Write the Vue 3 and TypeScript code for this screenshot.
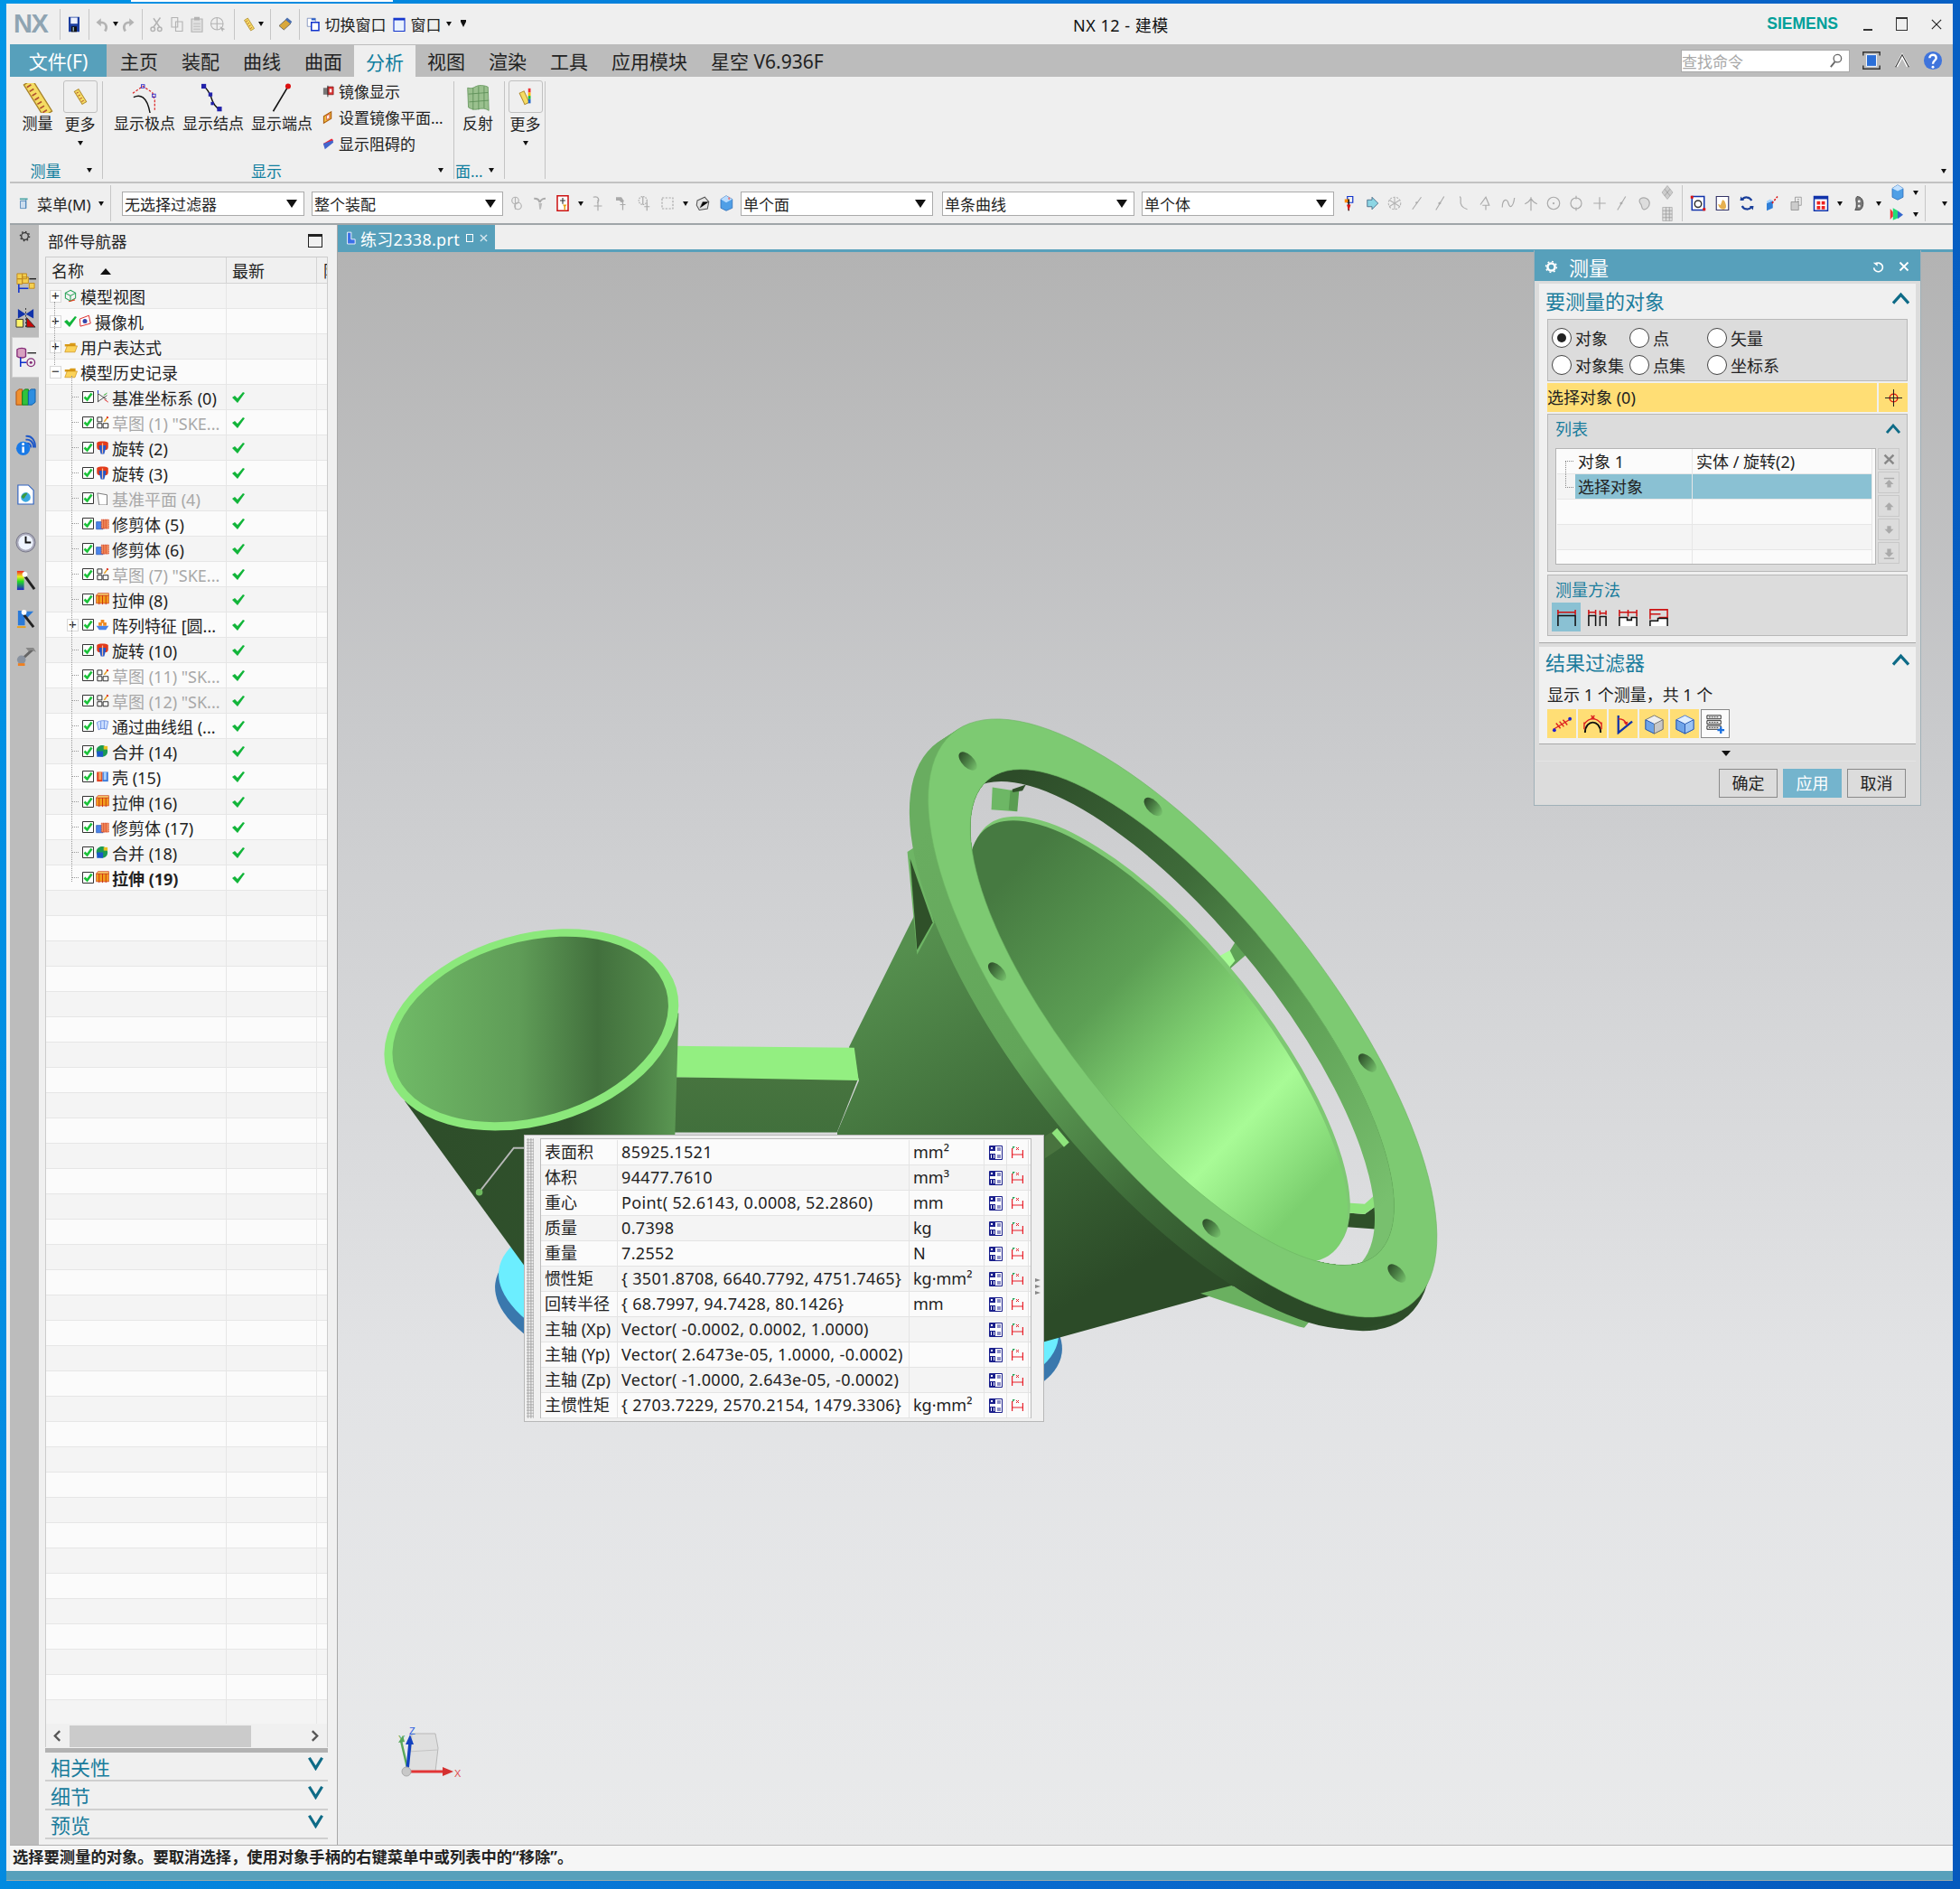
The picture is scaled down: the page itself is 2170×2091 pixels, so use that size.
<script setup lang="ts">
// rotated ellipse as a path, so it can be cut with fill-rule evenodd
const ell = (cx: number, cy: number, rx: number, ry: number, deg: number): string => {
  const r = (deg * Math.PI) / 180
  const dx = rx * Math.cos(r)
  const dy = rx * Math.sin(r)
  const a = `${(cx - dx).toFixed(1)} ${(cy - dy).toFixed(1)}`
  const b = `${(cx + dx).toFixed(1)} ${(cy + dy).toFixed(1)}`
  return `M${a}A${rx} ${ry} ${deg} 1 0 ${b}A${rx} ${ry} ${deg} 1 0 ${a}Z`
}

type Pt = [number, number]

// ring of the big horn, in the crop's coordinates
const ringHole = ell(807, 755, 815, 299, 45.1)
const ringFace = ell(808, 757, 972, 383, 45.3)
const ringSides = [1, 0.85, 0.7, 0.55, 0.4, 0.25, 0.1].map(
  (t) => ell(808 - 54 * t, 757 + 30 * t, 972, 383, 45.3) + ringHole,
)
const ringUnder = ell(792, 791, 972, 383, 45.3) + ringHole
const wallBand = ringHole + ell(751, 785, 815, 299, 45.1)
const hornInner = ell(738, 815, 728, 265, 45)
const hornRim = ell(745, 805, 728, 265, 45)
const ringHoles: Pt[] = [[187, 120], [723, 233], [272, 642], [1343, 868], [892, 1278], [1428, 1390]]

// small funnel on the left
const funnelRim = ell(466, 368, 436, 276, -16.2)
const funnelIn = ell(463, 367, 409, 253, -16.2)

const tabs = ['主页', '装配', '曲线', '曲面', '分析', '视图', '渲染', '工具', '应用模块', '星空 V6.936F']

const railIcons = [
  { id: 'r-asm', top: 29 },
  { id: 'r-con', top: 10 },
  { id: 'r-part', top: 6 },
  { id: 'r-books', top: 6 },
  { id: 'r-info', top: 23 },
  { id: 'r-doc', top: 25 },
  { id: 'r-clock', top: 23 },
  { id: 'r-color', top: 12 },
  { id: 'r-tool', top: 12 },
  { id: 'r-wrench', top: 12 },
]

const snapA = ['s1', 's2', 's3']
const snapB = ['s4', 's5', 's6']
const snapLine = ['l1', 'l2', 'l3', 'l4', 'l5', 'l6', 'l7', 'l8', 'l9', 'l2']

interface Row {
  name: string
  icon: string
  kind?: 'root' | 'feature'
  open?: '+' | '-'
  check?: boolean
  muted?: boolean
  bold?: boolean
}

const rows: Row[] = [
  { name: '模型视图', icon: 't-view', kind: 'root', open: '+' },
  { name: '摄像机', icon: 't-cam', kind: 'root', open: '+', check: true },
  { name: '用户表达式', icon: 't-folder', kind: 'root', open: '+' },
  { name: '模型历史记录', icon: 't-folder', kind: 'root', open: '-' },
  { name: '基准坐标系 (0)', icon: 't-csys' },
  { name: '草图 (1) "SKE...', icon: 't-sketch', muted: true },
  { name: '旋转 (2)', icon: 't-rev' },
  { name: '旋转 (3)', icon: 't-rev' },
  { name: '基准平面 (4)', icon: 't-plane', muted: true },
  { name: '修剪体 (5)', icon: 't-trim' },
  { name: '修剪体 (6)', icon: 't-trim' },
  { name: '草图 (7) "SKE...', icon: 't-sketch', muted: true },
  { name: '拉伸 (8)', icon: 't-ext' },
  { name: '阵列特征 [圆...', icon: 't-pat', open: '+' },
  { name: '旋转 (10)', icon: 't-rev' },
  { name: '草图 (11) "SK...', icon: 't-sketch', muted: true },
  { name: '草图 (12) "SK...', icon: 't-sketch', muted: true },
  { name: '通过曲线组 (...', icon: 't-curve' },
  { name: '合并 (14)', icon: 't-unite' },
  { name: '壳 (15)', icon: 't-shell' },
  { name: '拉伸 (16)', icon: 't-ext' },
  { name: '修剪体 (17)', icon: 't-trim' },
  { name: '合并 (18)', icon: 't-unite' },
  { name: '拉伸 (19)', icon: 't-ext', bold: true },
]
const blankRows = 33

const props_ = [
  ['表面积', '85925.1521', 'mm²'],
  ['体积', '94477.7610', 'mm³'],
  ['重心', 'Point( 52.6143, 0.0008, 52.2860)', 'mm'],
  ['质量', '0.7398', 'kg'],
  ['重量', '7.2552', 'N'],
  ['惯性矩', '{ 3501.8708, 6640.7792, 4751.7465}', 'kg·mm²'],
  ['回转半径', '{ 68.7997, 94.7428, 80.1426}', 'mm'],
  ['主轴 (Xp)', 'Vector( -0.0002, 0.0002, 1.0000)', ''],
  ['主轴 (Yp)', 'Vector( 2.6473e-05, 1.0000, -0.0002)', ''],
  ['主轴 (Zp)', 'Vector( -1.0000, 2.643e-05, -0.0002)', ''],
  ['主惯性矩', '{ 2703.7229, 2570.2154, 1479.3306}', 'kg·mm²'],
]

const radios = [
  { label: '对象', on: true },
  { label: '点' },
  { label: '矢量' },
  { label: '对象集' },
  { label: '点集' },
  { label: '坐标系' },
]

const sideBtns = ['b-x', 'b-top', 'b-up', 'b-down', 'b-bottom']
const methods = ['m1', 'm2', 'm3', 'm4']
const filters = ['f1', 'f2', 'f3', 'f4', 'f5']
</script>

<template>
  <div class="desktop">
    <svg class="sprite" aria-hidden="true">
      <defs>
        <symbol id="save" viewBox="0 0 24 24"><path fill="#1b3d9e" d="M4 1h16v22H4z" /><path fill="#eef2ff" d="M7 2h10v9H7z" /><path fill="#111" d="M8 15h8v8H8z" /><path fill="#8ab" d="M10 16h2v6h-2z" /></symbol>
        <symbol id="g-undo" viewBox="0 0 24 24"><path fill="none" stroke="#b3b3b3" stroke-width="3.5" d="M15 22c4-6 2-13-7-13" /><path fill="#b3b3b3" d="M9 3v12L2 9z" /></symbol>
        <symbol id="g-redo" viewBox="0 0 24 24"><path fill="none" stroke="#b3b3b3" stroke-width="3.5" d="M9 22C5 16 7 9 16 9" /><path fill="#b3b3b3" d="M15 3v12l7-6z" /></symbol>
        <symbol id="g-cut" viewBox="0 0 24 24"><path fill="none" stroke="#b3b3b3" stroke-width="2" d="M18 2 8 16M8 3l9 13" /><circle cx="7" cy="19" r="3" fill="none" stroke="#b3b3b3" stroke-width="2" /><circle cx="17" cy="19" r="3" fill="none" stroke="#b3b3b3" stroke-width="2" /></symbol>
        <symbol id="g-copy" viewBox="0 0 24 24"><path fill="#efefef" stroke="#b3b3b3" stroke-width="1.5" d="M4 2h9v14H4zM10 8h10v14H10z" /></symbol>
        <symbol id="g-paste" viewBox="0 0 24 24"><path fill="#e0e0e0" stroke="#b3b3b3" stroke-width="1.5" d="M4 4h16v19H4z" /><path fill="#b3b3b3" d="M8 1h8v5H8z" /><path stroke="#b3b3b3" d="M7 11h10M7 15h10M7 19h10" /></symbol>
        <symbol id="g-globe" viewBox="0 0 24 24"><circle cx="11" cy="11" r="9" fill="#efefef" stroke="#b3b3b3" stroke-width="1.5" /><path fill="none" stroke="#b3b3b3" stroke-width="1.5" d="M2 11h18M11 2v18" /><path fill="#b3b3b3" d="m15 15 8 4-3 1-1 3z" /></symbol>
        <symbol id="ruler" viewBox="0 0 24 24"><g transform="rotate(-32 12 12)"><rect x="8" y="-3" width="8" height="30" fill="#f5dc63" stroke="#a9842a" /><path stroke="#b05030" stroke-width="1.2" d="M9 0h4M9 4h4M9 8h4M9 12h4M9 16h4M9 20h4M9 24h4" /></g></symbol>
        <symbol id="ruler2" viewBox="0 0 24 24"><g transform="rotate(-32 12 12)"><rect x="9" y="3" width="6" height="18" fill="#f5dc63" stroke="#b08a2c" /><path stroke="#b05030" d="M10 6h3M10 10h3M10 14h3M10 18h3" /></g></symbol>
        <symbol id="ruler3" viewBox="0 0 24 24"><g transform="rotate(-25 12 12)"><rect x="7" y="5" width="6" height="15" fill="#f5dc63" stroke="#b08a2c" /></g><path fill="#e33" d="M15 2h3v5h-3z" /><path fill="#fb0" d="M15 7h3v4h-3z" /><path fill="#2b3" d="M15 11h3v4h-3z" /><path fill="#26c" d="M15 15h3v5h-3z" /></symbol>
        <symbol id="eraser" viewBox="0 0 24 24"><path fill="#d9a83c" stroke="#555" d="m4 14 10-9 7 6-10 9z" /><path fill="#4a6fb0" d="m13 5 3-3 7 6-2 3z" /></symbol>
        <symbol id="switch" viewBox="0 0 24 24"><path fill="#fff" stroke="#6a7fb3" d="M3 3h12v12H3z" /><path fill="#fff" stroke="#1133cc" stroke-width="2" d="M9 9h11v12H9z" /><path fill="#2b60c8" d="M9 3h6v3H9z" /></symbol>
        <symbol id="window" viewBox="0 0 24 24"><path fill="#e9f2ff" stroke="#1133cc" stroke-width="1.5" d="M4 3h16v19H4z" /><path fill="#1133cc" d="M4 3h16v3H4z" /></symbol>
        <symbol id="pole" viewBox="0 0 38 38"><path fill="none" stroke="#111" stroke-width="1.6" d="M5 18c8-4 17-2 21 20" /><path fill="none" stroke="#d22" stroke-width="1.4" stroke-dasharray="3 2" d="M4 13 17 4l12 8 3 10v14" /><rect x="15" y="2" width="4" height="4" fill="none" stroke="#22c" /><rect x="29" y="14" width="4" height="4" fill="none" stroke="#22c" /></symbol>
        <symbol id="knot" viewBox="0 0 38 38"><path fill="none" stroke="#111" stroke-width="1.6" d="M7 4c4 3 7 8 9 13 2 7 5 14 13 18" /><g fill="#22a"><rect x="4" y="1" width="6" height="6" /><rect x="13" y="12" width="5" height="5" /><rect x="16" y="24" width="4" height="4" /><rect x="24" y="30" width="6" height="6" /></g></symbol>
        <symbol id="endpt" viewBox="0 0 38 38"><path stroke="#111" stroke-width="1.8" d="M8 36 26 6" /><circle cx="27" cy="4" r="3.5" fill="#d11" /></symbol>
        <symbol id="mir1" viewBox="0 0 24 24"><path fill="#777" d="M3 6h8v12H3z" /><path fill="#d33" stroke="#611" d="M11 4h10v14H11z" /><path fill="#fff" d="M14 8h4v6h-4z" /><path stroke="#333" stroke-width="1.5" d="M11 2v20" /></symbol>
        <symbol id="mir2" viewBox="0 0 24 24"><path fill="#f0c040" stroke="#b06010" stroke-width="2" d="m4 10 13-8v12L4 22z" /><path fill="#fff" stroke="#c22" d="m9 9 5-3v7l-5 3z" /></symbol>
        <symbol id="mir3" viewBox="0 0 24 24"><path fill="#e23" d="m3 12 15-9 3 3-15 12z" /><path fill="#46c" d="m3 12 3 10 15-12-1-4z" /></symbol>
        <symbol id="reflect" viewBox="0 0 38 38"><path fill="#9ac08e" stroke="#6a9a62" d="M6 6c8 2 8-2 15-3 4 0 7 0 11 2l1 30c-4-3-9-3-13-2-5 1-8 1-13-2z" /><path stroke="#5e8f58" d="M13 6v28M20 4v30M27 4v28M7 14l25-2M8 24l25-2" /></symbol>
        <symbol id="menu" viewBox="0 0 24 24"><path fill="#5aa" d="M3 3h14v3H3z" /><path fill="#cde" stroke="#26a" d="M4 8h10v13H4z" /><path stroke="#26a" d="M14 5v16" /></symbol>
        <symbol id="s1" viewBox="0 0 24 24"><g fill="none" stroke="#b3b3b3" stroke-width="1.6"><circle cx="10" cy="8" r="5" /><circle cx="14" cy="16" r="5" /><path d="M10 3v18" /></g></symbol>
        <symbol id="s2" viewBox="0 0 24 24"><path fill="none" stroke="#aaa" stroke-width="2.5" d="M3 5c8 0 8 5 8 6m9-6c-6 0-8 4-8 6" /><path fill="#bbb" d="M10 12h5l-2 9h-2z" /></symbol>
        <symbol id="s3" viewBox="0 0 24 24"><path fill="#fff" stroke="#c11" stroke-width="2" d="M4 1h16v22H4z" /><path stroke="#333" stroke-width="1.5" d="M12 4v9M8 8h8" /><path fill="#e9a010" d="m12 14 6 0-2 3v5h-2v-5z" /></symbol>
        <symbol id="s4" viewBox="0 0 24 24"><path fill="none" stroke="#aaa" stroke-width="1.6" d="M5 3c8-2 10 4 6 9M12 7v16M6 16h12" /></symbol>
        <symbol id="s5" viewBox="0 0 24 24"><path fill="#aaa" d="M4 3h8l4 6-4 2-3-3H4z" /><path fill="none" stroke="#aaa" stroke-width="1.6" d="M14 9v13M10 14l8 0" /></symbol>
        <symbol id="s6" viewBox="0 0 24 24"><circle cx="9" cy="8" r="6" fill="none" stroke="#aaa" stroke-width="1.6" stroke-dasharray="2 1.5" /><path fill="none" stroke="#aaa" stroke-width="1.6" d="M15 10v13M11 17h8M9 2v12" /></symbol>
        <symbol id="s7" viewBox="0 0 24 24"><path fill="none" stroke="#aaa" stroke-width="1.6" stroke-dasharray="3 2" d="M4 4h16v16H4z" /></symbol>
        <symbol id="s8" viewBox="0 0 24 24"><path fill="#e4e4e4" stroke="#555" stroke-width="1.4" d="m4 8 11-5 6 7-2 10-12 2-4-7z" /><path stroke="#555" d="m8 19 4-9 9 0" /></symbol>
        <symbol id="s9" viewBox="0 0 24 24"><path fill="#4f9fe6" stroke="#2a6ab5" d="m12 1 9 5v13l-9 4-8-4V6z" /><path fill="#b8dcff" d="m12 1 9 5-9 5-8-5z" /><path fill="#e77" d="M15 3l3 1-1 3-2-1z" /></symbol>
        <symbol id="a1" viewBox="0 0 24 24"><path fill="none" stroke="#13c" stroke-width="1.6" d="M9 2h8v9H9z" /><path fill="#f80" d="M5 6h6v5H5z" /><path stroke="#111" stroke-width="2" d="M11 6v17" /><path fill="#d11" d="M8 14h6l-3 9z" /></symbol>
        <symbol id="a2" viewBox="0 0 24 24"><path fill="#8dd6e4" stroke="#357" d="M5 7h7V3l9 9-9 9v-4H5z" /></symbol>
        <symbol id="l0" viewBox="0 0 24 24"><g fill="none" stroke="#b3b3b3" stroke-width="1.4"><circle cx="12" cy="12" r="9" stroke-dasharray="3 2" /><path d="M12 3v18M4 7l16 10M20 7 4 17" /></g></symbol>
        <symbol id="l1" viewBox="0 0 24 24"><path stroke="#aaa" stroke-width="1.5" d="m5 21 13-18" /><circle cx="11" cy="11" r="1.5" fill="#aaa" /></symbol>
        <symbol id="l2" viewBox="0 0 24 24"><path stroke="#aaa" stroke-width="1.5" d="m5 22 12-20" /><path stroke="#aaa" stroke-width="3" d="m9 13 3-2" /></symbol>
        <symbol id="l3" viewBox="0 0 24 24"><path fill="none" stroke="#aaa" stroke-width="1.6" d="M7 2c4 4-2 8 3 14 2 3 5 4 8 5" /></symbol>
        <symbol id="l4" viewBox="0 0 24 24"><path fill="none" stroke="#aaa" stroke-width="1.6" d="M4 14 12 3l5 12H7M12 15v7" /></symbol>
        <symbol id="l5" viewBox="0 0 24 24"><path fill="none" stroke="#aaa" stroke-width="1.6" d="M3 18c0-12 7-14 9-6s7 6 9-8" /></symbol>
        <symbol id="l6" viewBox="0 0 24 24"><path fill="none" stroke="#aaa" stroke-width="1.6" d="M12 3v20M3 13c4-2 7-4 9-8 2 4 5 6 9 8" /></symbol>
        <symbol id="l7" viewBox="0 0 24 24"><circle cx="12" cy="12" r="9" fill="none" stroke="#aaa" stroke-width="1.6" /><circle cx="12" cy="12" r="1.5" fill="#aaa" /></symbol>
        <symbol id="l8" viewBox="0 0 24 24"><circle cx="12" cy="12" r="8" fill="none" stroke="#aaa" stroke-width="1.6" /><path stroke="#aaa" stroke-width="1.6" d="M12 1v5M12 18v5" /></symbol>
        <symbol id="l9" viewBox="0 0 24 24"><path stroke="#aaa" stroke-width="1.6" d="M12 3v18M3 12h18" /></symbol>
        <symbol id="l10" viewBox="0 0 24 24"><path fill="#ddd" stroke="#aaa" stroke-width="1.6" d="M6 5c6-3 13 1 13 7s-6 10-9 9-2-6-4-8-3-6 0-8z" /></symbol>
        <symbol id="l11" viewBox="0 0 24 24"><path fill="#ccc" stroke="#aaa" d="m12 2 8 10-8 10-8-10z" /><path stroke="#999" d="m8 7 8 10m0-10L8 17" /></symbol>
        <symbol id="l12" viewBox="0 0 24 24"><path fill="#ddd" stroke="#aaa" d="M5 2h14v20H5z" /><path stroke="#999" d="M5 7h14M5 12h14M5 17h14M10 2v20M15 2v20" /></symbol>
        <symbol id="v1" viewBox="0 0 24 24"><path fill="#fff" stroke="#13a" stroke-width="2" d="M3 2h18v20H3z" /><circle cx="12" cy="13" r="5" fill="none" stroke="#333" stroke-width="2" /><path fill="#d11" d="M1 1h4v4H1zM19 19h4v4h-4z" /></symbol>
        <symbol id="v2" viewBox="0 0 24 24"><path fill="#fff" stroke="#336" stroke-width="1.5" d="M3 2h18v20H3z" /><path fill="#e6b050" d="M12 7c3 0 4 3 5 7s0 7-4 7-6-3-7-6 2-1 3 0z" /></symbol>
        <symbol id="v3" viewBox="0 0 24 24"><path fill="none" stroke="#1a3f9a" stroke-width="3" d="M19 8a8 8 0 0 0-14-1M5 16a8 8 0 0 0 14 1" /><path fill="#1a3f9a" d="m3 2 5 6H2zM21 22l-5-6h6z" /></symbol>
        <symbol id="v4" viewBox="0 0 24 24"><path fill="#2f7fd8" d="m4 12 9-4v11l-9 4z" /><path fill="#9fd0ff" d="m4 12 5-2 4-2-4-2-5 3z" /><path stroke="#d11" stroke-width="2" stroke-dasharray="3 2" d="m12 12 8-10" /></symbol>
        <symbol id="v5" viewBox="0 0 24 24"><path fill="#eee" stroke="#888" d="M10 3h9v12h-9z" /><path fill="#ccc" stroke="#888" d="M4 10h11v12H4z" /><path stroke="#888" d="M13 6h3M13 9h3" /></symbol>
        <symbol id="v6" viewBox="0 0 24 24"><path fill="#fff" stroke="#13a" stroke-width="2" d="M2 2h20v21H2z" /><path fill="#13a" d="M2 2h20v4H2z" /><path fill="#e22" d="M6 9h5v5H6zM13 9h5v5h-5zM6 16h5v5H6zM13 16h5v5h-5z" /></symbol>
        <symbol id="v7" viewBox="0 0 24 24"><path fill="#777" stroke="#333" d="M8 2c6 0 9 5 9 10 0 6-3 10-6 10H5c2-3 2-5 2-9s-2-8 1-11z" /><circle cx="11" cy="9" r="2" fill="#eee" /><circle cx="11" cy="16" r="2" fill="#eee" /></symbol>
        <symbol id="v8" viewBox="0 0 24 24"><path fill="#4f9fe6" stroke="#2a6ab5" d="m12 1 8 5v13l-8 4-8-4V6z" /><path fill="#c4e2ff" d="m12 1 8 5-8 4-8-4z" /></symbol>
        <symbol id="v9" viewBox="0 0 24 24"><path fill="#2d7" d="M5 3v18l7-3V7z" /><path fill="#36c" d="m12 7 8 6-8 6z" /><path fill="#e33" d="M5 9 1 4v16l4-5z" /></symbol>
        <symbol id="r-gear" viewBox="0 0 24 24"><circle cx="12" cy="12" r="7" fill="none" stroke="#333" stroke-width="2.4" /><circle cx="12" cy="12" r="9.5" fill="none" stroke="#333" stroke-width="2.4" stroke-dasharray="3 4.4" /></symbol>
        <symbol id="r-asm" viewBox="0 0 24 24"><path fill="#f4d050" stroke="#c08a20" d="M2 2h6v6H2zM8 2h5v6H8zM2 8h6v6H2zM8 6h7v7H8zM16 13h6v6h-6z" /><path stroke="#13c" stroke-width="1.6" d="M4 14v10M4 19h11" /><path stroke="#222" stroke-width="1.5" d="M16 8h8" /></symbol>
        <symbol id="r-con" viewBox="0 0 24 24"><path fill="#13a" d="m3 1 9 6 9-6v11l-9-5-9 5z" /><path stroke="#333" stroke-dasharray="2 2" d="M12 0v24" /><path fill="#fff46a" stroke="#333" d="M1 13h8v9H1z" /><path fill="#c80808" stroke="#333" d="M13 11l10 11H13z" /></symbol>
        <symbol id="r-part" viewBox="0 0 24 24"><path fill="#d7a0c0" stroke="#842c78" stroke-width="1.4" d="M2 3c2-2 9-2 10 0v8c-1 2-8 2-10 0z" /><path stroke="#13c" stroke-width="1.6" d="M6 12v11M6 18h7" /><circle cx="18" cy="18" r="4.5" fill="none" stroke="#842c78" stroke-width="1.4" /><circle cx="18" cy="18" r="1.6" fill="#842c78" /><path stroke="#222" stroke-width="1.4" d="M14 7h10" /></symbol>
        <symbol id="r-books" viewBox="0 0 24 24"><path fill="#f09030" stroke="#b05010" d="m1 6 3-3h4v18H1z" /><path fill="#32c23c" stroke="#108018" d="m8 6 3-3h4v18H8z" /><path fill="#2e8ee0" stroke="#1060a8" d="m15 6 3-3h5v15l-4 3h-4z" /></symbol>
        <symbol id="r-info" viewBox="0 0 24 24"><path fill="none" stroke="#1e58c8" stroke-width="2" d="M12 6c5-1 9 3 9 9M12 2c7-1 11 5 11 13M13 10c3 0 5 2 5 5" /><circle cx="9" cy="16" r="8" fill="#1a7ae6" /><path stroke="#fff" stroke-width="2.6" d="M9 14v7" /><circle cx="9" cy="11" r="1.6" fill="#fff" /></symbol>
        <symbol id="r-doc" viewBox="0 0 24 24"><path fill="#fff" stroke="#2f62c0" stroke-width="1.2" d="M3 1h12l6 6v16H3z" /><circle cx="12" cy="15" r="5.5" fill="#3aa8e0" /><path fill="#3a9a40" d="M7 14c2-3 5-4 7-4-1 3-2 3-3 5s-3 2-4-1z" /></symbol>
        <symbol id="r-clock" viewBox="0 0 24 24"><circle cx="12" cy="12" r="11" fill="#aab" stroke="#778" /><circle cx="12" cy="12" r="8.5" fill="#eef4ff" /><path fill="none" stroke="#111" stroke-width="2" d="M12 5v7h6" /></symbol>
        <symbol id="r-color" viewBox="0 0 24 24"><defs><linearGradient id="rainb" x1="0" y1="0" x2="0" y2="1"><stop offset="0" stop-color="#e22" /><stop offset=".3" stop-color="#ee2" /><stop offset=".55" stop-color="#2d2" /><stop offset="1" stop-color="#22c" /></linearGradient></defs><path fill="url(#rainb)" d="M2 1h8v22H2z" /><path stroke="#222" stroke-width="3" d="m11 7 11 15" /><circle cx="11" cy="5" r="3" fill="#fff" /></symbol>
        <symbol id="r-tool" viewBox="0 0 24 24"><path fill="#2a7ad8" d="M3 3h8v17H3zM12 4h9l-9 9z" /><path stroke="#e8a020" stroke-width="2" d="M2 22h10" /><path stroke="#222" stroke-width="3" d="m10 8 11 14" /><circle cx="10" cy="5" r="3" fill="#fff" /></symbol>
        <symbol id="r-wrench" viewBox="0 0 24 24"><path stroke="#666" stroke-width="3" d="M20 4 6 17" /><path fill="#888" d="M12 2h9l3 5-5-2-4 1z" /><circle cx="7" cy="16" r="5" fill="#8a93a0" /><path fill="#f08020" d="M3 20h8v3H3z" /></symbol>
        <symbol id="t-view" viewBox="0 0 24 24"><g fill="none" stroke="#2aa35a" stroke-width="1.7"><path d="m12 2 9 5v9l-9 5-9-5V7z" /><path d="m3 7 9 5 9-5M12 12v9" /></g><path stroke="#e04020" stroke-width="2" d="m9 22 11-3" /></symbol>
        <symbol id="t-cam" viewBox="0 0 24 24"><path fill="#fff" stroke="#d22" stroke-width="1.5" d="m3 8 16-6 3 14-18 5z" /><circle cx="12" cy="12" r="4" fill="#34a" /></symbol>
        <symbol id="t-folder" viewBox="0 0 24 24"><path fill="#d99a18" d="M2 8h8l2-2h9v6H2z" /><path fill="#fbd35a" stroke="#c88a10" d="M2 22 6 11h18l-4 11z" /></symbol>
        <symbol id="t-csys" viewBox="0 0 24 24"><path fill="none" stroke="#222" stroke-width="1.2" d="m4 6 15 10M4 6v15M4 20l16-11" /><path stroke="#d22" stroke-width="1.5" d="m15 16 7 5" /><path stroke="#2a2" stroke-width="1.5" d="m14 9 6-4" /><path stroke="#13c" stroke-width="1.5" d="M4 6V0" /></symbol>
        <symbol id="t-sketch" viewBox="0 0 24 24"><path fill="#fff" stroke="#222" stroke-width="1.5" d="M3 3h8v8H3zM3 14h8v8H3zM13 14h9v8h-9z" /><path stroke="#e8a020" stroke-width="2.5" d="m15 11 6-8" /><path fill="#d11" d="m20 1 3 2-2 2-2-2z" /></symbol>
        <symbol id="t-rev" viewBox="0 0 24 24"><path fill="#e23b1a" d="M2 3c4-3 16-3 20 0v8c0 4-3 5-5 5H7c-2 0-5-1-5-5z" /><path fill="#2456c8" d="M6 8h12v4l-3 11H9L6 12z" /><path fill="#f4c0a0" d="M11 4h2v18h-2z" /></symbol>
        <symbol id="t-plane" viewBox="0 0 24 24"><path fill="#fff" stroke="#555" stroke-width="1.2" d="m3 3 17 3v18H6z" /></symbol>
        <symbol id="t-trim" viewBox="0 0 24 24"><path fill="#4a84e8" stroke="#1a4cb0" d="M1 9h12v13H1z" /><path fill="#f09060" stroke="#d02a10" stroke-dasharray="2 1" d="M10 5h13v16H10z" /><path stroke="#d02a10" d="M14 5v16M18 5v16" /></symbol>
        <symbol id="t-ext" viewBox="0 0 24 24"><path fill="#f2a020" stroke="#c82808" d="M1 5h22v14H1z" /><path fill="#f8d070" stroke="#c82808" d="M1 5 4 1h19v4z" /><path stroke="#c82808" stroke-width="1.4" d="M6 5v16M12 5v16M18 5v16" /></symbol>
        <symbol id="t-pat" viewBox="0 0 24 24"><path fill="#4a84e8" d="M1 14h22l-5 7H6z" /><path fill="#f08a20" d="M5 8h6v6H5zM13 8h6v6h-6zM9 3h6v6H9z" /></symbol>
        <symbol id="t-curve" viewBox="0 0 24 24"><path fill="#cfe0ff" stroke="#3a6ad8" d="M2 6c6-4 14-4 20-2l-3 14c-5-2-10-2-14 1z" /><path stroke="#3a6ad8" d="M9 4v13M15 3v14" /></symbol>
        <symbol id="t-unite" viewBox="0 0 24 24"><path fill="#1c9a52" d="M8 2c6-2 13 2 13 10s-7 11-13 9a10 10 0 0 1 0-19z" /><path fill="#1a58c8" d="M2 12h11v10H2z" /><path fill="#e8c020" d="M14 3h7v6h-7z" /></symbol>
        <symbol id="t-shell" viewBox="0 0 24 24"><path fill="#e23b1a" d="M2 4h10v17H2z" /><path fill="#f0a060" d="M5 4h5v14H5z" /><path fill="#3a7ad8" d="M12 4h10v17H12z" /><path fill="#a8d0ff" d="M14 4h5v14h-5z" /></symbol>
        <symbol id="tbl" viewBox="0 0 15 16"><path fill="#fff" stroke="#1a1f8c" d="M.5.5h14v15H.5z" /><path fill="#1a1f8c" d="M1 1h6v5H1zM1 9h6v6H1z" /><path fill="#fff" d="M2 2h2v2H2zM2 10h1v4H2zM5 10h1v4H5z" /><path stroke="#1a1f8c" d="M9 3h4M9 5h4M9 11h4M9 13h4" /></symbol>
        <symbol id="dim" viewBox="0 0 13 16"><path fill="#2aa35a" d="M1 1h3l-3 3z" /><path stroke="#e8202a" stroke-width="1.2" d="M.6 3v11M12.4 5v9M1 10h11" /><path stroke="#e8202a" d="m5 2 3 3m0-3L5 5" /></symbol>
        <symbol id="b-x" viewBox="0 0 24 24"><path stroke="#888" stroke-width="3.5" d="m5 5 14 14M19 5 5 19" /></symbol>
        <symbol id="b-top" viewBox="0 0 24 24"><path stroke="#aaa" stroke-width="2" d="M4 5h16" /><path fill="#aaa" d="m12 7 7 7h-4v5H9v-5H5z" /></symbol>
        <symbol id="b-up" viewBox="0 0 24 24"><path fill="#aaa" d="m12 6 7 7h-4v5H9v-5H5z" /></symbol>
        <symbol id="b-down" viewBox="0 0 24 24"><path fill="#aaa" d="m12 18 7-7h-4V6H9v5H5z" /></symbol>
        <symbol id="b-bottom" viewBox="0 0 24 24"><path stroke="#aaa" stroke-width="2" d="M4 20h16" /><path fill="#aaa" d="m12 18 7-7h-4V5H9v6H5z" /></symbol>
        <symbol id="m1" viewBox="0 0 24 24"><path fill="none" stroke="#c11" stroke-width="1.6" d="M2 9V3M22 9V3M2 6h20" /><path fill="none" stroke="#111" stroke-width="1.6" d="M2 22v-12h20v12" /></symbol>
        <symbol id="m2" viewBox="0 0 24 24"><path fill="none" stroke="#c11" stroke-width="1.6" d="M2 9V3M10 9V3M2 6h8M15 9V4M22 9V4M15 7h7" /><path fill="none" stroke="#111" stroke-width="1.6" d="M2 22v-12h8v12M15 22V11h7v11" /></symbol>
        <symbol id="m3" viewBox="0 0 24 24"><path fill="none" stroke="#c11" stroke-width="1.6" d="M2 11V3M12 11V3M22 11V3M2 6h20" /><path fill="#fff" stroke="#111" stroke-width="1.6" d="M2 22v-10h9v3h5v-3h6v10" /></symbol>
        <symbol id="m4" viewBox="0 0 24 24"><path fill="none" stroke="#c11" stroke-width="1.6" d="M2 14V3h20v5M2 8h12M22 8v4H12" /><path fill="#fff" stroke="#111" stroke-width="1.6" d="M2 22v-6h9v-3h11v9" /></symbol>
        <symbol id="f1" viewBox="0 0 24 24"><path stroke="#d22" stroke-width="1.5" d="m2 18 20-12M5 11l5 6M9 9l5 6M13 7l5 6" /><circle cx="3" cy="19" r="2" fill="#22c" /><circle cx="21" cy="6" r="2" fill="#22c" /></symbol>
        <symbol id="f2" viewBox="0 0 24 24"><path fill="none" stroke="#111" stroke-width="2" d="M3 22c0-8 5-12 9-12s9 4 9 12" /><path fill="none" stroke="#d22" stroke-width="1.5" d="M2 18V10M22 18V10M2 12c3-4 6-6 10-6s7 2 10 6M10 2l4 4m0-4-4 4" /></symbol>
        <symbol id="f3" viewBox="0 0 24 24"><path fill="none" stroke="#13a" stroke-width="2.4" d="M6 2v20L22 9" /><path fill="none" stroke="#d22" stroke-width="1.5" d="M6 6c5 0 8 2 9 6" /><path fill="#d22" d="m12 10 5-1-1 5z" /></symbol>
        <symbol id="f4" viewBox="0 0 24 24"><path fill="#eee" stroke="#777" d="m12 2 10 5v11l-10 5-10-5V7z" /><path fill="#6fa4e8" stroke="#2a5ab0" d="M2 7l10 5v11L2 18z" /><path fill="#c8c8c8" stroke="#777" d="m22 7-10 5v11l10-5z" /></symbol>
        <symbol id="f5" viewBox="0 0 24 24"><path fill="#dfeeff" stroke="#4a7ad8" d="m12 2 10 5v11l-10 5-10-5V7z" /><path fill="#6fa4e8" stroke="#2a5ab0" d="M2 7l10 5v11L2 18z" /><path fill="#9cc4f4" stroke="#2a5ab0" d="m22 7-10 5v11l10-5z" /></symbol>
        <symbol id="f6" viewBox="0 0 24 24"><path fill="#fff" stroke="#222" d="M2 2h16v4H2zM2 8h16v4H2zM2 14h16v4H2z" /><path stroke="#222" stroke-dasharray="2 1" d="M4 4h12M4 10h12M4 16h12" /><path stroke="#1a70e0" stroke-width="2.4" d="M18 15v8M14 19h8" /></symbol>
      </defs>
    </svg>

    <div class="window">
      <header class="titlebar">
        <div class="qat">
          <span class="nx">NX</span>
          <i class="sep"></i>
          <svg class="ico"><use href="#save" /></svg>
          <i class="sep"></i>
          <svg class="ico"><use href="#g-undo" /></svg>
          <i class="tri small"></i>
          <svg class="ico"><use href="#g-redo" /></svg>
          <i class="sep"></i>
          <svg class="ico spaced"><use href="#g-cut" /></svg>
          <svg class="ico spaced"><use href="#g-copy" /></svg>
          <svg class="ico spaced"><use href="#g-paste" /></svg>
          <svg class="ico spaced"><use href="#g-globe" /></svg>
          <i class="sep"></i>
          <svg class="ico"><use href="#ruler2" /></svg>
          <i class="tri small"></i>
          <i class="sep"></i>
          <svg class="ico"><use href="#eraser" /></svg>
          <i class="sep"></i>
          <svg class="ico"><use href="#switch" /></svg>
          <span class="qat-text">切换窗口</span>
          <svg class="ico"><use href="#window" /></svg>
          <span class="qat-text">窗口</span>
          <i class="tri small"></i>
          <i class="tri small lined"></i>
        </div>
        <div class="title">NX 12 - 建模</div>
        <div class="siemens">SIEMENS</div>
        <div class="winbtns">
          <i class="min"></i>
          <i class="max"></i>
          <svg class="close" viewBox="0 0 14 14"><path stroke="#222" stroke-width="1.3" d="m1 1 12 12M13 1 1 13" /></svg>
        </div>
      </header>

      <nav class="tabs">
        <div class="file-tab">文件(F)</div>
        <div v-for="t in tabs" :key="t" class="tab" :class="{ active: t === '分析' }">{{ t }}</div>
        <div class="search"><span>查找命令</span>
          <svg viewBox="0 0 18 18" class="lens"><circle cx="11" cy="6" r="4.5" fill="#fff" stroke="#666" stroke-width="1.4" /><path stroke="#666" stroke-width="2" d="m8 10-5 6" /></svg>
        </div>
        <svg class="tabicon fit" viewBox="0 0 24 24"><path fill="none" stroke="#333" stroke-width="1.6" d="M2 6V2h20v4M2 18v4h20v-4" /><path fill="#2b6fd8" stroke="#fff" d="M6 5h12v14H6z" /></svg>
        <svg class="tabicon" viewBox="0 0 24 24"><path fill="none" stroke="#fff" stroke-width="3.4" d="m5 19 7-13 7 13" /><path fill="none" stroke="#333" stroke-width="1.2" d="m4 20 8-15 8 15" /></svg>
        <svg class="tabicon" viewBox="0 0 24 24"><circle cx="12" cy="12" r="11" fill="#3f74dc" /><path fill="none" stroke="#fff" stroke-width="2.6" d="M8 9c0-5 8-5 8 0 0 3-4 3-4 7" /><circle cx="12" cy="20" r="1.6" fill="#fff" /></svg>
      </nav>

      <section class="ribbon">
        <div class="group g-measure">
          <div class="group-body">
            <div class="big"><svg class="big-ico"><use href="#ruler" /></svg><span>测量</span></div>
            <div class="big"><span class="boxed"><svg><use href="#ruler2" /></svg></span><span>更多</span><i class="tri small"></i></div>
          </div>
          <div class="group-foot"><span>测量</span><i class="tri small"></i></div>
        </div>
        <div class="group g-show">
          <div class="group-body">
            <div class="big wide"><svg class="big-ico"><use href="#pole" /></svg><span>显示极点</span></div>
            <div class="big wide"><svg class="big-ico"><use href="#knot" /></svg><span>显示结点</span></div>
            <div class="big wide"><svg class="big-ico"><use href="#endpt" /></svg><span>显示端点</span></div>
            <div class="smalls">
              <div><svg><use href="#mir1" /></svg>镜像显示</div>
              <div><svg><use href="#mir2" /></svg>设置镜像平面...</div>
              <div><svg><use href="#mir3" /></svg>显示阻碍的</div>
            </div>
          </div>
          <div class="group-foot"><span>显示</span><i class="tri small"></i></div>
        </div>
        <div class="group g-face">
          <div class="group-body">
            <div class="big"><svg class="big-ico"><use href="#reflect" /></svg><span>反射</span></div>
          </div>
          <div class="group-foot"><span>面...</span><i class="tri small"></i></div>
        </div>
        <div class="group g-more">
          <div class="group-body">
            <div class="big"><span class="boxed"><svg><use href="#ruler3" /></svg></span><span>更多</span><i class="tri small"></i></div>
          </div>
        </div>
        <i class="tri small ribbon-end"></i>
      </section>

      <section class="toolbar">
        <svg class="ico menu-ico"><use href="#menu" /></svg>
        <span class="menu-text">菜单(M)</span><i class="tri small"></i>
        <i class="sep tall"></i>
        <div class="combo w1">无选择过滤器<i class="tri"></i></div>
        <div class="combo w2">整个装配<i class="tri"></i></div>
        <div class="tools first">
          <svg v-for="id in snapA" :key="id" class="ico"><use :href="`#${id}`" /></svg>
          <i class="tri small"></i>
          <svg v-for="id in snapB" :key="id" class="ico"><use :href="`#${id}`" /></svg>
          <svg class="ico"><use href="#s7" /></svg>
          <i class="tri small"></i>
          <svg class="ico"><use href="#s8" /></svg>
          <svg class="ico"><use href="#s9" /></svg>
        </div>
        <div class="combo w3">单个面<i class="tri"></i></div>
        <div class="combo w4">单条曲线<i class="tri"></i></div>
        <div class="combo w5">单个体<i class="tri"></i></div>
        <div class="tools second">
          <svg class="ico"><use href="#a1" /></svg>
          <svg class="ico"><use href="#a2" /></svg>
          <svg class="ico"><use href="#l0" /></svg>
          <svg v-for="(id, i) in snapLine" :key="i" class="ico"><use :href="`#${id}`" /></svg>
          <svg class="ico"><use href="#l10" /></svg>
          <div class="stack"><svg class="ico"><use href="#l11" /></svg><svg class="ico"><use href="#l12" /></svg></div>
        </div>
        <i class="sep tall"></i>
        <div class="tools third">
          <svg class="ico"><use href="#v1" /></svg>
          <svg class="ico"><use href="#v2" /></svg>
          <svg class="ico"><use href="#v3" /></svg>
          <svg class="ico"><use href="#v4" /></svg>
          <svg class="ico"><use href="#v5" /></svg>
          <svg class="ico"><use href="#v6" /></svg>
          <i class="tri small"></i>
          <svg class="ico"><use href="#v7" /></svg>
          <i class="tri small"></i>
          <div class="stack">
            <span class="pair"><svg class="ico"><use href="#v8" /></svg><i class="tri small"></i></span>
            <span class="pair"><svg class="ico"><use href="#v9" /></svg><i class="tri small"></i></span>
          </div>
        </div>
        <i class="sep tall"></i>
        <i class="tri small end"></i>
      </section>

      <main class="main">
        <aside class="rail">
          <svg class="gear"><use href="#r-gear" /></svg>
          <div
            v-for="r in railIcons"
            :key="r.id"
            class="rail-item"
            :class="{ selected: r.id === 'r-part' }"
            :style="{ marginTop: r.top + 'px' }"
          ><svg><use :href="`#${r.id}`" /></svg></div>
        </aside>

        <div class="nav">
          <div class="nav-title">
            <span>部件导航器</span>
            <i class="nav-max"></i>
          </div>
          <div class="tree">
            <div class="tree-head">
              <div class="th name">名称<i class="sort"></i></div>
              <div class="th">最新</div>
              <div class="th cut">附</div>
            </div>
            <div class="tree-body">
              <i class="dots vtop"></i>
              <i class="dots vmain"></i>
              <div
                v-for="r in rows"
                :key="r.name"
                class="row"
                :class="{ muted: r.muted, bold: r.bold }"
              >
                <div class="cell name" :class="r.kind === 'root' ? 'root' : r.open ? 'feature open' : 'feature'">
                  <span v-if="r.open" class="exp">{{ r.open === '+' ? '+' : '−' }}</span>
                  <i v-if="r.kind !== 'root'" class="hdot"></i>
                  <svg v-if="r.kind !== 'root'" class="box" viewBox="0 0 13 13"><path fill="#fff" stroke="#333" d="M.5.5h12v12H.5z" /><path fill="none" stroke="#1cc23a" stroke-width="2.6" d="m2.5 6.5 3 3 5-7" /></svg>
                  <svg v-if="r.check" class="tick lead" viewBox="0 0 14 12"><path fill="#12b53a" d="m0 6 3-2 3 3 6-7 2 1-8 11z" /></svg>
                  <svg class="tree-ico"><use :href="`#${r.icon}`" /></svg>
                  <span class="label">{{ r.name }}</span>
                </div>
                <div class="cell">
                  <svg v-if="r.kind !== 'root'" class="tick" viewBox="0 0 14 12"><path fill="#12b53a" d="m0 6 3-2 3 3 6-7 2 1-8 11z" /></svg>
                </div>
                <div class="cell"></div>
              </div>
              <div v-for="n in blankRows" :key="'b' + n" class="row blank">
                <div class="cell"></div>
                <div class="cell"></div>
                <div class="cell"></div>
              </div>
            </div>
            <div class="hscroll">
              <svg viewBox="0 0 10 16" class="sb-arrow"><path fill="none" stroke="#555" stroke-width="2.6" d="M8 2 2 8l6 6" /></svg>
              <div class="sb-thumb"></div>
              <svg viewBox="0 0 10 16" class="sb-arrow right"><path fill="none" stroke="#555" stroke-width="2.6" d="m2 2 6 6-6 6" /></svg>
            </div>
          </div>
          <div class="nav-split"></div>
          <div v-for="s in ['相关性', '细节', '预览']" :key="s" class="nav-sec">
            <span>{{ s }}</span>
            <svg viewBox="0 0 20 18"><path fill="none" stroke="#0e6b87" stroke-width="3.6" d="m2 2 8 13 8-13" /></svg>
          </div>
        </div>

        <div class="view">
          <div class="doc-tabs">
            <div class="doc-tab">
              <svg viewBox="0 0 14 18"><path fill="#3a70e8" stroke="#fff" d="M3 1h5v9h5v6H3z" /></svg>
              <span>练习2338.prt</span>
              <i class="pin"></i>
              <svg class="x" viewBox="0 0 10 10"><path stroke="#d6e6ee" stroke-width="1.6" d="m1 1 8 8M9 1 1 9" /></svg>
            </div>
          </div>
          <div class="canvas">
            <svg class="model" width="1787" height="1792" viewBox="374 250 1787 1792">
              <defs>
                <linearGradient id="bodyBig" gradientUnits="userSpaceOnUse" x1="1020" y1="1040" x2="1230" y2="1420"><stop offset="0" stop-color="#558f4e" /><stop offset=".55" stop-color="#3d6a38" /><stop offset="1" stop-color="#2c4b28" /></linearGradient>
                <linearGradient id="sideGrad" gradientUnits="userSpaceOnUse" x1="60" y1="300" x2="1050" y2="1450"><stop offset="0" stop-color="#69ad60" /><stop offset=".4" stop-color="#62a559" /><stop offset=".72" stop-color="#3d6a38" /><stop offset="1" stop-color="#2b4a27" /></linearGradient>
                <linearGradient id="wallGrad" gradientUnits="userSpaceOnUse" x1="330" y1="150" x2="1380" y2="1230"><stop offset="0" stop-color="#2d4c29" /><stop offset=".35" stop-color="#3e6b39" /><stop offset=".65" stop-color="#5e9f55" /><stop offset="1" stop-color="#78c06e" /></linearGradient>
                <linearGradient id="innerGrad" gradientUnits="userSpaceOnUse" x1="330" y1="380" x2="1130" y2="1240"><stop offset="0" stop-color="#467a41" /><stop offset=".35" stop-color="#5c9f54" /><stop offset=".62" stop-color="#88dc78" /><stop offset=".78" stop-color="#a8fb96" /><stop offset="1" stop-color="#7cd06f" /></linearGradient>
                <linearGradient id="holeGrad" x1="0" y1="0" x2="1" y2="0"><stop offset="0" stop-color="#2d4c29" /><stop offset=".5" stop-color="#4c8246" /><stop offset="1" stop-color="#76c06c" /></linearGradient>
                <linearGradient id="funIn" gradientUnits="userSpaceOnUse" x1="80" y1="0" x2="860" y2="0"><stop offset="0" stop-color="#6fb966" /><stop offset=".45" stop-color="#5f9c57" /><stop offset=".74" stop-color="#42703d" /><stop offset="1" stop-color="#568f4e" /></linearGradient>
                <linearGradient id="funOut" gradientUnits="userSpaceOnUse" x1="200" y1="0" x2="880" y2="0"><stop offset="0" stop-color="#2e4e2a" /><stop offset=".55" stop-color="#30512c" /><stop offset=".75" stop-color="#3f6e3a" /><stop offset="1" stop-color="#5a9652" /></linearGradient>
                <linearGradient id="ribWall" gradientUnits="userSpaceOnUse" x1="0" y1="505" x2="0" y2="670"><stop offset="0" stop-color="#47743f" /><stop offset="1" stop-color="#41703c" /></linearGradient>
              </defs>

              <!-- disk behind everything -->
              <ellipse cx="862" cy="1460" rx="316" ry="108" transform="rotate(7 862 1460)" fill="#3a78ad" />
              <ellipse cx="862" cy="1445" rx="312" ry="108" transform="rotate(7 862 1445)" fill="#6ceeff" />

              <!-- outer cone body -->
              <path fill="url(#bodyBig)" d="M1012 1015 940 1160l11 37-24 57v306l230-74 210-58L1300 1250 1100 1100 1034 1000z" />

              <g transform="translate(410 1000) scale(.3827)">
                <path fill="url(#ribWall)" d="M870 505h543l-63 160H870z" />
                <path fill="#93ef81" d="m885 415 515 5 13 95-533-10z" />
                <path fill="url(#funOut)" d="M100 575 445 1050H870L892 320 400 300z" />
                <path fill="#8be87b" :d="funnelRim" />
                <path fill="url(#funIn)" :d="funnelIn" />
                <path fill="none" stroke="#b7b8b8" stroke-width="5" d="m315 838 100-128h30" />
                <circle cx="315" cy="838" r="10" fill="#6fbb60" />
              </g>

              <g transform="translate(1000 790) scale(.3827 .4464)">
                <!-- fin and bottom lug -->
                <path fill="#6eb565" d="m12 345 18-10 60 185-50 80z" />
                <path fill="#2f5029" d="m20 362 65 158-45 68z" />
                <path fill="#6ab060" d="m860 1440 90-20 225 90-15 15-15-3z" />
                <path fill="#49743f" d="m410 1050 35-20 35 35-70 40z" />
                <path fill="#8ee47c" d="m445 1030 35 35-15 12-35-35z" />

                <path fill="#2d4c29" fill-rule="evenodd" :d="ringUnder" />
                <path v-for="(d, i) in ringSides" :key="i" fill="url(#sideGrad)" fill-rule="evenodd" :d="d" />

                <!-- spokes in the slot -->
                <path fill="#6db765" d="m258 185 75 10-5 50-73-5z" />
                <path fill="#5a9d52" d="m310 192 25 3-5 50-25-4z" />
                <path fill="#2f5029" d="m315 190 40-12-10 15-28 4z" />
                <path fill="#5ea256" d="m945 590 25-35 35 35-60 45z" />
                <path fill="#a8fb96" d="m915 603 30-14 15 26-20 20z" />
                <path fill="#2f5029" d="m1285 1240 50 3 30-18v55l-80-5z" />
                <path fill="#8ee47c" d="m1285 1215 50 3 30-23v30l-30 18-50-3z" />

                <path fill="url(#wallGrad)" fill-rule="evenodd" :d="wallBand" />
                <path fill="#7ec873" :d="hornRim" />
                <path fill="url(#innerGrad)" :d="hornInner" />

                <path fill="#7dca72" stroke="#6cb562" stroke-width="1.5" fill-rule="evenodd" :d="ringFace + ringHole" />
                <ellipse
                  v-for="(h, i) in ringHoles"
                  :key="i"
                  :cx="h[0]"
                  :cy="h[1]"
                  rx="31"
                  ry="16"
                  :transform="`rotate(38 ${h[0]} ${h[1]})`"
                  fill="url(#holeGrad)"
                />
              </g>

              <!-- axis triad -->
              <g>
                <path fill="#dcdcdc" fill-opacity=".8" stroke="#b8b8b8" d="M456 1920h26l3 16-3 26h-32z" />
                <path fill="none" stroke="#c4c4c4" d="M452 1940l32-2M456 1920l-1 20" />
                <path stroke="#58a85a" stroke-width="2.4" d="m451 1958-7-30" />
                <path fill="#58a85a" d="m441 1930 5-8 2 7z" />
                <path stroke="#e23535" stroke-width="3" d="M452 1962h40" />
                <path fill="#d43030" d="m490 1957 12 5-12 5z" />
                <path stroke="#1242c0" stroke-width="3.4" d="m451 1960 3-30" />
                <path fill="#1242c0" d="m449 1932 5-11 4 11z" />
                <circle cx="450" cy="1962" r="5" fill="#c8c8c8" stroke="#aaa" />
                <text x="453" y="1921" class="axis" fill="#2a5ce0">Z</text>
                <text x="441" y="1930" class="axis" fill="#58a85a">Y</text>
                <text x="503" y="1968" class="axis" fill="#e05050">X</text>
              </g>
            </svg>

            <!-- property callout -->
            <div class="callout">
              <i class="grip"></i>
              <div class="props">
                <div v-for="p in props_" :key="p[0]" class="prop">
                  <div>{{ p[0] }}</div>
                  <div class="val">{{ p[1] }}</div>
                  <div class="unit">{{ p[2] }}</div>
                  <div class="ic"><svg class="tbl"><use href="#tbl" /></svg></div>
                  <div class="ic"><svg class="dim"><use href="#dim" /></svg></div>
                </div>
              </div>
              <div class="more-arrows"><i></i><i></i><i></i></div>
            </div>

            <!-- measure dialog -->
            <div class="dialog">
              <div class="dlg-title">
                <svg class="dlg-gear" viewBox="0 0 24 24"><circle cx="12" cy="12" r="6.5" fill="none" stroke="#fff" stroke-width="4" /><circle cx="12" cy="12" r="9.5" fill="none" stroke="#fff" stroke-width="2.4" stroke-dasharray="3 4.4" /></svg>
                <span>测量</span>
                <svg class="dlg-btn" viewBox="0 0 16 16"><path fill="none" stroke="#fff" stroke-width="2" d="M4 4a6 6 0 1 1-2 5" /><path fill="#fff" d="M1 2h6v5z" /></svg>
                <svg class="dlg-btn last" viewBox="0 0 16 16"><path stroke="#fff" stroke-width="2.4" d="m2 2 12 12M14 2 2 14" /></svg>
              </div>
              <div class="sect first">
                <div class="sect-head">
                  <span>要测量的对象</span>
                  <svg viewBox="0 0 20 14"><path fill="none" stroke="#0e6b87" stroke-width="3.4" d="m1 13 9-10 9 10" /></svg>
                </div>
                <div class="radios">
                  <label v-for="r in radios" :key="r.label">
                    <i class="radio" :class="{ on: r.on }"></i>{{ r.label }}
                  </label>
                </div>
                <div class="pick">
                  <div class="pick-text">选择对象 (0)</div>
                  <div class="pick-btn">
                    <svg viewBox="0 0 22 22"><circle cx="11" cy="11" r="5" fill="none" stroke="#d11" stroke-width="1.6" /><path stroke="#222" stroke-width="1.2" d="M0 11h22M11 0v22" /></svg>
                  </div>
                </div>
                <div class="list-group">
                  <div class="sub-head">
                    <span>列表</span>
                    <svg viewBox="0 0 16 11"><path fill="none" stroke="#0e6b87" stroke-width="2.8" d="m1 10 7-8 7 8" /></svg>
                  </div>
                  <div class="list-wrap">
                    <div class="list">
                      <i class="list-dots"></i>
                      <div class="lrow"><div class="lc one">对象 1</div><div class="lc">实体 / 旋转(2)</div></div>
                      <div class="lrow sel"><div class="lc one">选择对象</div><div class="lc"></div></div>
                      <div class="lrow"><div class="lc one"></div><div class="lc"></div></div>
                      <div class="lrow alt"><div class="lc one"></div><div class="lc"></div></div>
                      <div class="lrow"><div class="lc one"></div><div class="lc"></div></div>
                    </div>
                    <div class="side-btns">
                      <div v-for="b in sideBtns" :key="b" class="side"><svg><use :href="`#${b}`" /></svg></div>
                    </div>
                  </div>
                </div>
                <div class="method">
                  <div class="sub-head">测量方法</div>
                  <div class="method-row">
                    <div v-for="(m, i) in methods" :key="m" class="mbtn" :class="{ on: i === 0 }"><svg><use :href="`#${m}`" /></svg></div>
                  </div>
                </div>
              </div>
              <div class="sect second">
                <div class="sect-head">
                  <span>结果过滤器</span>
                  <svg viewBox="0 0 20 14"><path fill="none" stroke="#0e6b87" stroke-width="3.4" d="m1 13 9-10 9 10" /></svg>
                </div>
                <div class="count">显示 1 个测量，共 1 个</div>
                <div class="filter-row">
                  <div v-for="f in filters" :key="f" class="fbtn"><svg><use :href="`#${f}`" /></svg></div>
                  <div class="fbtn plain"><svg><use href="#f6" /></svg></div>
                </div>
              </div>
              <div class="dlg-more"><i class="tri"></i></div>
              <div class="dlg-foot">
                <div class="btn">确定</div>
                <div class="btn apply">应用</div>
                <div class="btn">取消</div>
              </div>
            </div>
          </div>
        </div>
      </main>

      <footer class="status">选择要测量的对象。要取消选择，使用对象手柄的右键菜单中或列表中的“移除”。</footer>
      <div class="foot-strip"></div>
    </div>
  </div>
</template>

<style>
body {
  margin: 0;
  background: #0a78d8;
}
</style>

<style scoped>
.desktop {
  width: 2170px;
  height: 2091px;
  box-sizing: border-box;
  padding: 4px 8px 9px 7px;
  background:
    linear-gradient(#fff, #fff) 145px 0 / 290px 2px no-repeat,
    linear-gradient(100deg, #0095e6 0%, #0a6cd0 55%, #0559bd 100%);
  font-family: "Noto Sans", "Noto Sans CJK SC", sans-serif;
  font-size: 18px;
  color: #222;
  overflow: hidden;
}
.sprite {
  position: absolute;
  width: 0;
  height: 0;
}
.window {
  height: 100%;
  display: flex;
  flex-direction: column;
  background: #efefef;
  padding-left: 4px;
  box-sizing: border-box;
}
.ico {
  width: 18px;
  height: 20px;
  flex: none;
}
i {
  display: block;
  flex: none;
}
.tri {
  width: 0;
  height: 0;
  border-left: 6px solid transparent;
  border-right: 6px solid transparent;
  border-top: 9px solid #111;
}
.tri.small {
  border-left-width: 3.5px;
  border-right-width: 3.5px;
  border-top-width: 5px;
}
.sep {
  width: 1px;
  height: 34px;
  background: #c6c6c6;
  margin: 0 5px;
}
.sep.tall {
  height: 40px;
}

/* title bar */
.titlebar {
  height: 45px;
  display: flex;
  align-items: center;
  flex: none;
}
.qat {
  display: flex;
  align-items: center;
  width: 1177px;
  gap: 1.5px;
  padding-left: 4px;
  box-sizing: border-box;
}
.nx {
  font-family: "Liberation Sans", sans-serif;
  font-weight: 700;
  font-size: 29px;
  letter-spacing: -1.5px;
  color: #8fa4b2;
  width: 44px;
}
.ico.spaced {
  margin-right: 3px;
}
.tri.lined {
  border-top-width: 6px;
  margin-left: 8px;
  box-shadow: 0 -2px 0 #111;
}
.qat-text {
  font-size: 17px;
  margin: 0 4px 0 2px;
}
.title {
  font-size: 18px;
  letter-spacing: 0.5px;
  color: #111;
}
.siemens {
  margin-left: auto;
  font-family: "Liberation Sans", sans-serif;
  font-weight: 700;
  font-size: 17.5px;
  color: #00a09a;
}
.winbtns {
  display: flex;
  align-items: center;
  margin-left: 28px;
  gap: 26px;
  padding-right: 12px;
}
.min {
  width: 10px;
  height: 2px;
  background: #333;
  margin-top: 12px;
}
.max {
  width: 11px;
  height: 12px;
  border: 1px solid #333;
  border-top-width: 2px;
}
.close {
  width: 12px;
  height: 12px;
}

/* ribbon tabs */
.tabs {
  height: 36px;
  flex: none;
  display: flex;
  align-items: stretch;
  background: #bcbcbc;
}
.file-tab {
  width: 107px;
  background: #57a0bb;
  color: #fff;
  font-size: 21px;
  display: flex;
  align-items: center;
  justify-content: center;
  margin-right: 2px;
}
.tab {
  font-size: 21px;
  padding: 0 13px;
  display: flex;
  align-items: center;
  white-space: nowrap;
}
.tab.active {
  background: #efefef;
  color: #0f7e9e;
  margin-top: 1px;
}
.search {
  margin-left: auto;
  width: 187px;
  height: 25px;
  align-self: center;
  background: #fff;
  border: 1px solid #aaa;
  color: #a8a8a8;
  font-size: 17px;
  display: flex;
  align-items: center;
  justify-content: space-between;
  box-sizing: border-box;
  padding: 0 6px 0 0;
}
.lens {
  width: 17px;
  height: 17px;
}
.tabicon {
  width: 22px;
  height: 22px;
  align-self: center;
  margin-left: 12px;
}
.tabicon.fit {
  margin-left: 13px;
}
.tabicon:last-child {
  margin-right: 11px;
}

/* ribbon */
.ribbon {
  height: 116px;
  flex: none;
  display: flex;
  position: relative;
  padding-top: 5px;
  box-sizing: border-box;
}
.group {
  display: flex;
  flex-direction: column;
  border-right: 1px solid #c4c4c4;
  height: 108px;
  box-sizing: border-box;
}
.group-body {
  display: flex;
  height: 88px;
  flex: none;
}
.group-foot {
  height: 20px;
  display: flex;
  align-items: center;
  justify-content: center;
  color: #0f7e9e;
  font-size: 17px;
  position: relative;
}
.group-foot .tri {
  position: absolute;
  right: 11px;
  top: 8px;
}
.g-measure {
  width: 103px;
  padding-left: 7px;
}
.g-measure .group-foot {
  padding-right: 30px;
}
.g-show {
  width: 389px;
  padding-left: 8px;
}
.g-show .group-foot {
  padding-right: 34px;
}
.g-face {
  width: 56px;
  padding-left: 1px;
}
.g-face .group-foot {
  justify-content: flex-start;
}
.g-more {
  width: 45px;
  padding-left: 1px;
}
.big {
  width: 47px;
  display: flex;
  flex-direction: column;
  align-items: center;
  font-size: 17px;
  line-height: 22px;
}
.big.wide {
  width: 76px;
}
.g-face .big {
  width: 50px;
}
.big-ico {
  width: 38px;
  height: 33px;
  margin-top: 2px;
  margin-bottom: 1px;
  flex: none;
}
.boxed {
  width: 36px;
  height: 34px;
  border: 1px solid #c0c0c0;
  border-radius: 3px;
  display: flex;
  align-items: center;
  justify-content: center;
  margin-top: -1px;
  margin-bottom: 2px;
  flex: none;
}
.boxed svg {
  width: 22px;
  height: 22px;
}
.big .tri {
  margin-top: 7px;
}
.smalls {
  margin-left: 6px;
  margin-top: -4px;
  font-size: 17px;
  display: flex;
  flex-direction: column;
}
.smalls div {
  height: 29px;
  display: flex;
  align-items: center;
  gap: 4px;
  white-space: nowrap;
}
.smalls svg {
  width: 15px;
  height: 18px;
}
.ribbon-end {
  position: absolute;
  right: 7px;
  top: 102px;
}

/* selection toolbar */
.toolbar {
  height: 48px;
  flex: none;
  display: flex;
  align-items: center;
  border-top: 2px solid #c2c2c2;
  border-bottom: 2px solid #9fa5a8;
  box-sizing: border-box;
  font-size: 17px;
}
.menu-ico {
  margin-left: 9px;
  width: 15px;
}
.menu-text {
  margin: 0 5px 0 6px;
  white-space: nowrap;
  width: 63px;
  flex: none;
}
.toolbar .sep.tall {
  margin: 0 8px 0 7px;
}
.combo {
  height: 27px;
  background: #fff;
  border: 1px solid #aaa;
  box-sizing: border-box;
  flex: none;
  display: flex;
  align-items: center;
  justify-content: space-between;
  padding: 0 7px 0 2px;
  white-space: nowrap;
}
.w1 { width: 202px; margin-left: 4px; margin-right: 8px; }
.w2 { width: 212px; margin-right: 6px; }
.w3 { width: 213px; margin-right: 10px; }
.w4 { width: 213px; margin-right: 8px; }
.w5 { width: 213px; margin-right: 8px; }
.tools {
  display: flex;
  align-items: center;
  justify-content: space-between;
  flex: none;
  box-sizing: border-box;
}
.tools.first {
  width: 250px;
  margin-right: 7px;
}
.tools.second {
  width: 370px;
}
.tools.third {
  width: 253px;
}
.stack {
  display: flex;
  flex-direction: column;
  gap: 4px;
}
.pair {
  display: flex;
  align-items: center;
  gap: 8px;
}
.toolbar .end {
  margin-left: 10px;
}

/* main area */
.main {
  flex: 1;
  min-height: 0;
  display: flex;
}
.rail {
  width: 32px;
  flex: none;
  background: #bcbcbc;
  display: flex;
  flex-direction: column;
  align-items: center;
}
.gear {
  width: 13px;
  height: 13px;
  margin-top: 6px;
  flex: none;
}
.rail-item {
  width: 30px;
  align-self: flex-end;
  height: 30px;
  flex: none;
  display: flex;
  align-items: center;
  justify-content: center;
}
.rail-item svg {
  width: 23px;
  height: 25px;
}
.rail-item.selected {
  background: #efefef;
  height: 45px;
  border: 1px solid #d0d0d0;
  border-right: none;
  box-sizing: border-box;
}

.nav {
  width: 331px;
  flex: none;
  display: flex;
  flex-direction: column;
  background: #f0f0f0;
  border-right: 1px solid #a8a8a8;
  padding: 0 10px 0 7px;
  box-sizing: border-box;
}
.nav-title {
  height: 35px;
  flex: none;
  display: flex;
  align-items: center;
  justify-content: space-between;
  padding: 0 6px 0 3px;
  font-size: 17.5px;
}
.nav-max {
  width: 14px;
  height: 11px;
  border: 1.5px solid #222;
  border-top-width: 3px;
}
.tree {
  flex: none;
  border: 1px solid #ccc;
  border-bottom: none;
  height: 1649px;
  display: flex;
  flex-direction: column;
  overflow: hidden;
  background: #f0f0f0;
}
.tree-head {
  display: grid;
  grid-template-columns: 200px 100px 1fr;
  height: 29px;
  flex: none;
  border-bottom: 1px solid #d4d4d4;
  box-sizing: border-box;
}
.th {
  border-right: 1px solid #d4d4d4;
  padding-left: 6px;
  line-height: 30px;
  overflow: hidden;
  white-space: nowrap;
}
.th.cut {
  border: none;
  padding-left: 7px;
}
.sort {
  display: inline-block;
  margin-left: 18px;
  vertical-align: 3px;
  border-left: 6.5px solid transparent;
  border-right: 6.5px solid transparent;
  border-bottom: 7px solid #111;
}
.tree-body {
  position: relative;
  height: 1594px;
  flex: none;
  overflow: hidden;
}
.row {
  display: grid;
  grid-template-columns: 200px 100px 1fr;
  height: 28px;
  box-sizing: border-box;
  border-bottom: 1px solid #e6e6e6;
  background: #fbfbfb;
}
.row:nth-child(odd) {
  background: #f4f4f4;
}
.cell {
  border-right: 1px solid #e6e6e6;
  display: flex;
  align-items: center;
  position: relative;
  min-width: 0;
}
.cell:last-child {
  border-right: none;
}
.cell.name {
  white-space: nowrap;
}
.cell.root {
  padding-left: 4px;
}
.cell.feature {
  padding-left: 40px;
}
.cell.feature.open {
  padding-left: 23px;
}
.exp {
  width: 11px;
  height: 12px;
  border: 1px solid #d8d8d8;
  background: #fff;
  line-height: 10px;
  text-align: center;
  font-size: 15px;
  flex: none;
  box-sizing: content-box;
  margin-right: 2px;
  font-family: "Liberation Sans", sans-serif;
}
.cell.feature .exp {
  margin-right: 4px;
}
.box {
  width: 13px;
  height: 13px;
  flex: none;
  margin-right: 2px;
}
.tree-ico {
  width: 15px;
  height: 15px;
  flex: none;
  margin-right: 3px;
}
.root .tree-ico {
  width: 16px;
}
.tick {
  width: 14px;
  height: 12px;
  margin-left: 6px;
}
.tick.lead {
  margin: 0 1px;
  flex: none;
}
.hdot {
  position: absolute;
  left: 29px;
  width: 7px;
  border-top: 1px dotted #999;
}
.feature.open .hdot {
  display: none;
}
.muted .label {
  color: #a8a8a8;
}
.bold .label {
  font-weight: 700;
}
.dots {
  position: absolute;
  border-left: 1px dotted #999;
  z-index: 1;
}
.vtop {
  left: 9px;
  top: 20px;
  height: 70px;
}
.vmain {
  left: 28px;
  top: 102px;
  height: 560px;
}
.hscroll {
  height: 25px;
  flex: none;
  margin-top: 1px;
  display: flex;
  align-items: center;
  background: #f0f0f0;
  position: relative;
}
.sb-arrow {
  width: 9px;
  height: 15px;
  margin-left: 8px;
  flex: none;
}
.sb-arrow.right {
  margin-left: 66px;
}
.sb-thumb {
  width: 201px;
  height: 24px;
  background: #cbcbcb;
  margin-left: 9px;
  flex: none;
}
.nav-split {
  height: 5px;
  background: #b2b2b2;
  flex: none;
  margin-top: 1px;
}
.nav-sec {
  height: 32px;
  flex: none;
  display: flex;
  align-items: center;
  justify-content: space-between;
  box-sizing: border-box;
  border-bottom: 2px solid #cfcfcf;
  color: #1a7c9c;
  font-size: 22px;
  padding: 0 4px 0 6px;
}
.nav-sec svg {
  width: 19px;
  height: 16px;
  margin-bottom: 6px;
}

/* viewport */
.view {
  flex: 1;
  min-width: 0;
  display: flex;
  flex-direction: column;
  position: relative;
}
.doc-tabs {
  height: 30px;
  flex: none;
  border-bottom: 3px solid #57a0bb;
  box-sizing: border-box;
  display: flex;
}
.doc-tab {
  width: 174px;
  background: #57a0bb;
  color: #fff;
  display: flex;
  align-items: center;
  padding-left: 8px;
  gap: 5px;
  box-sizing: border-box;
  height: 29px;
}
.doc-tab svg {
  width: 12px;
  height: 16px;
  flex: none;
}
.doc-tab span {
  white-space: nowrap;
  letter-spacing: 0.3px;
}
.doc-tab .pin {
  width: 6px;
  height: 7px;
  border: 1px solid #fff;
  margin-left: 2px;
}
.doc-tab .x {
  width: 9px;
  height: 9px;
  margin-left: 2px;
}
.canvas {
  position: relative;
  flex: 1;
  min-height: 0;
  background: linear-gradient(#b3b3b3 0%, #c9cacc 30%, #d6d7d9 50%, #e2e3e5 70%, #e9eaeb 100%);
}
.model {
  position: absolute;
  left: 0;
  top: -30px;
}
.axis {
  font-family: "Liberation Sans", sans-serif;
  font-size: 11px;
}

/* property callout */
.callout {
  position: absolute;
  left: 206px;
  top: 977px;
  width: 576px;
  height: 318px;
  box-sizing: border-box;
  background: #f0f0f0;
  border: 1px solid #b8b8b8;
  display: flex;
  padding: 3px 0 3px 2px;
}
.grip {
  width: 8px;
  background-image: radial-gradient(#b0b0b0 1.2px, transparent 1.4px);
  background-size: 3.2px 3.2px;
  margin-right: 7px;
}
.props {
  width: 544px;
  flex: none;
  border: 1px solid #bbb;
  box-sizing: border-box;
  background: #fbfbfb;
  padding-top: 1px;
}
.prop {
  display: grid;
  grid-template-columns: 85px 323px 83px 25px 24px;
  height: 28px;
  box-sizing: border-box;
  border-bottom: 1px solid #e4e4e4;
  white-space: nowrap;
  line-height: 26px;
}
.prop:nth-child(even) {
  background: #f4f4f4;
}
.prop > div {
  border-right: 1px solid #e4e4e4;
  padding-left: 4px;
  overflow: hidden;
}
.prop .val {
  letter-spacing: 0.33px;
}
.prop .ic {
  display: flex;
  align-items: center;
  justify-content: center;
  padding: 0;
}
.tbl {
  width: 15px;
  height: 16px;
}
.dim {
  width: 13px;
  height: 16px;
}
.more-arrows {
  width: 12px;
  display: flex;
  flex-direction: column;
  justify-content: center;
  gap: 3px;
  padding-left: 4px;
  padding-top: 17px;
}
.more-arrows i {
  width: 0;
  height: 0;
  border-top: 2.5px solid transparent;
  border-bottom: 2.5px solid transparent;
  border-left: 6px solid #888;
}

/* measure dialog */
.dialog {
  position: absolute;
  left: 1324px;
  top: -2px;
  width: 429px;
  height: 615px;
  box-sizing: border-box;
  background: #dcdcdc;
  border: 1px solid #9fb0b8;
  border-top: none;
  display: flex;
  flex-direction: column;
}
.dlg-title {
  height: 34px;
  flex: none;
  background: #57a0bb;
  color: #fff;
  display: flex;
  align-items: center;
  padding: 2px 0 0 11px;
  box-sizing: border-box;
  font-size: 22px;
}
.dlg-gear {
  width: 15px;
  height: 15px;
  margin-right: 12px;
}
.dlg-btn {
  width: 13px;
  height: 13px;
  margin-left: auto;
}
.dlg-btn.last {
  margin-left: 16px;
  margin-right: 12px;
  width: 12px;
  height: 12px;
}
.sect {
  margin: 0 5px;
  background: #f0f0f0;
  flex: none;
  box-sizing: border-box;
}
.sect.first {
  margin-top: 3px;
  height: 398px;
  border-bottom: 1px solid #a8a8a8;
}
.sect.second {
  margin-top: 4px;
  height: 108px;
  border-bottom: 1px solid #a8a8a8;
}
.sect-head {
  height: 38px;
  display: flex;
  align-items: center;
  justify-content: space-between;
  padding: 0 7px 3px;
  color: #1a7c9c;
  font-size: 22px;
  box-sizing: border-box;
}
.sect.first .sect-head {
  height: 39px;
}
.sect.second .sect-head {
  padding-bottom: 6px;
}
.sect-head svg {
  width: 19px;
  height: 14px;
  margin-bottom: 4px;
}
.radios {
  margin-left: 9px;
  width: 399px;
  height: 69px;
  box-sizing: border-box;
  background: #dcdcdc;
  border: 1px solid #b8b8b8;
  display: grid;
  grid-template-columns: 86px 86px 1fr;
  grid-auto-rows: 30px;
  padding: 5px 0 0 4px;
}
.radios label {
  display: flex;
  align-items: center;
  gap: 4px;
  white-space: nowrap;
}
.radio {
  width: 22px;
  height: 22px;
  border: 1px solid #444;
  border-radius: 50%;
  background: #fff;
  box-sizing: border-box;
  position: relative;
}
.radio.on::after {
  content: "";
  position: absolute;
  left: 5px;
  top: 5px;
  width: 10px;
  height: 10px;
  border-radius: 50%;
  background: #222;
}
.pick {
  margin: 2px 0 2px 9px;
  width: 399px;
  height: 32px;
  display: flex;
  gap: 2px;
}
.pick-text {
  flex: 1;
  background: #ffde75;
  line-height: 33px;
}
.pick-btn {
  width: 32px;
  background: #ffde75;
  display: flex;
  align-items: center;
  justify-content: center;
}
.pick-btn svg {
  width: 19px;
  height: 19px;
}
.list-group {
  margin-left: 9px;
  width: 399px;
  height: 175px;
  box-sizing: border-box;
  background: #dcdcdc;
  border: 1px solid #b8b8b8;
}
.sub-head {
  height: 36px;
  display: flex;
  align-items: center;
  justify-content: space-between;
  padding: 0 6px 0 8px;
  color: #1a7c9c;
  font-size: 18px;
  box-sizing: border-box;
}
.list-group .sub-head {
  height: 37px;
  padding-bottom: 7px;
}
.sub-head svg {
  width: 16px;
  height: 11px;
  margin-right: 1px;
}
.list-wrap {
  display: flex;
  padding-left: 8px;
  gap: 2px;
}
.list {
  width: 355px;
  height: 129px;
  flex: none;
  box-sizing: border-box;
  background: #fbfbfb;
  border: 1px solid #b4b4b4;
  overflow: hidden;
  position: relative;
  padding: 0 3px 0 1px;
}
.lrow {
  display: grid;
  grid-template-columns: 150px 1fr;
  height: 28px;
  border-bottom: 1px solid #e6e6e6;
  box-sizing: border-box;
  line-height: 28px;
}
.lrow.alt {
  background: #f4f4f4;
}
.lc {
  border-right: 1px solid #e6e6e6;
  padding-left: 4px;
  white-space: nowrap;
}
.lc.one {
  padding-left: 23px;
}
.lrow.sel {
  background: linear-gradient(90deg, #f4f4f4 20px, #8ac1d3 20px);
}
.list-dots {
  position: absolute;
  left: 10px;
  top: 13px;
  width: 8px;
  height: 28px;
  border-left: 1px dotted #888;
  border-top: 1px dotted #888;
  border-bottom: 1px dotted #888;
}
.side-btns {
  display: flex;
  flex-direction: column;
  gap: 2px;
}
.side {
  width: 24px;
  height: 24px;
  box-sizing: border-box;
  border: 1px solid #c8c8c8;
  display: flex;
  align-items: center;
  justify-content: center;
}
.side svg {
  width: 17px;
  height: 17px;
}
.method {
  margin: 3px 0 0 9px;
  width: 399px;
  height: 68px;
  box-sizing: border-box;
  background: #dcdcdc;
  border: 1px solid #b8b8b8;
}
.method .sub-head {
  height: 30px;
}
.method-row {
  display: flex;
  gap: 2px;
  padding-left: 4px;
}
.mbtn {
  width: 32px;
  height: 32px;
  display: flex;
  align-items: center;
  justify-content: center;
}
.mbtn.on {
  background: #8ac1d3;
}
.mbtn svg {
  width: 23px;
  height: 23px;
}
.count {
  padding-left: 9px;
  height: 28px;
  line-height: 30px;
}
.filter-row {
  display: flex;
  gap: 2px;
  padding-left: 9px;
  margin-top: 3px;
}
.fbtn {
  width: 32px;
  height: 32px;
  background: #ffde75;
  display: flex;
  align-items: center;
  justify-content: center;
  box-sizing: border-box;
}
.fbtn svg {
  width: 23px;
  height: 23px;
}
.fbtn.plain {
  background: #fbfbfb;
  border: 1px solid #888;
}
.dlg-more {
  height: 17px;
  flex: none;
  display: flex;
  align-items: center;
  justify-content: center;
  margin-left: 2px;
  border-bottom: 1px solid #e4e4e4;
  margin-right: 5px;
  padding-top: 1px;
}
.dlg-more .tri {
  border-left-width: 5px;
  border-right-width: 5px;
  border-top-width: 6px;
  margin-right: 0;
}
.dlg-foot {
  display: flex;
  justify-content: flex-end;
  gap: 6px;
  padding: 8px 16px 0 0;
}
.btn {
  width: 65px;
  height: 32px;
  box-sizing: border-box;
  border: 1px solid #8a8a8a;
  text-align: center;
  line-height: 30px;
}
.btn.apply {
  background: #74b4cd;
  border-color: #74b4cd;
  color: #fff;
}

/* status */
.status {
  height: 29px;
  flex: none;
  background: #f6f6f6;
  border-top: 1px solid #b0b0b0;
  box-sizing: border-box;
  padding-left: 3px;
  font-size: 17.3px;
  font-weight: 700;
  line-height: 26px;
  white-space: nowrap;
}
.foot-strip {
  height: 10px;
  flex: none;
  background: #57a0bb;
  margin-left: -4px;
  border-bottom: 1px solid #9aa;
}
</style>
